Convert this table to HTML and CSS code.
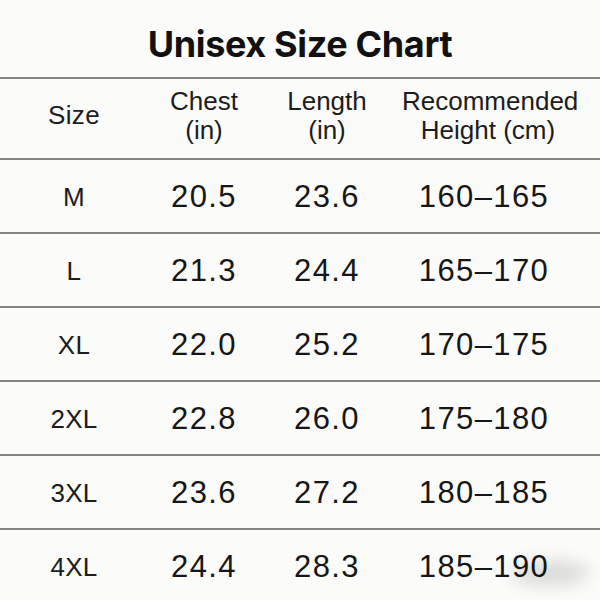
FILE: index.html
```html
<!DOCTYPE html>
<html>
<head>
<meta charset="utf-8">
<link rel="stylesheet" href="styles.css">
</head>
<body>
<div class="page">
  <h1 class="title">Unisex Size Chart</h1>
  <div class="table">
    <div class="row head">
      <div class="cell size">Size</div>
      <div class="cell">Chest<br>(in)</div>
      <div class="cell">Length<br>(in)</div>
      <div class="cell">Recommended<br>Height (cm)</div>
    </div>
    <div class="row data"><div class="cell size">M</div><div class="cell num">20.5</div><div class="cell num">23.6</div><div class="cell num">160–165</div></div>
    <div class="row data"><div class="cell size">L</div><div class="cell num">21.3</div><div class="cell num">24.4</div><div class="cell num">165–170</div></div>
    <div class="row data"><div class="cell size">XL</div><div class="cell num">22.0</div><div class="cell num">25.2</div><div class="cell num">170–175</div></div>
    <div class="row data"><div class="cell size">2XL</div><div class="cell num">22.8</div><div class="cell num">26.0</div><div class="cell num">175–180</div></div>
    <div class="row data"><div class="cell size">3XL</div><div class="cell num">23.6</div><div class="cell num">27.2</div><div class="cell num">180–185</div></div>
    <div class="row data last"><div class="cell size">4XL</div><div class="cell num">24.4</div><div class="cell num">28.3</div><div class="cell num">185–190</div></div>
  </div>
  <div class="smudge"></div>
</div>
</body>
</html>
```
FILE: styles.css
```css
html, body {
  margin: 0;
  padding: 0;
  background: #fbfbf9;
}
.page {
  position: relative;
  width: 600px;
  height: 600px;
  overflow: hidden;
  font-family: "Liberation Sans", Arial, sans-serif;
  color: #111;
}
.title {
  margin: 0;
  height: 77px;
  display: flex;
  align-items: center;
  justify-content: center;
  padding-top: 10px;
  box-sizing: border-box;
  font-size: 36px;
  font-weight: bold;
  letter-spacing: -0.35px;
  font-family: "Inter", "Liberation Sans", sans-serif;
}
.table {
  border-top: 2px solid #858585;
}
.row {
  display: grid;
  grid-template-columns: 148px 112px 134px 180px;
  height: 72px;
  border-bottom: 2px solid #858585;
  align-items: center;
}
.row.data {
  padding-top: 3px;
  box-sizing: content-box;
  height: 69px;
}
.row.head {
  height: 81px;
  padding-bottom: 5px;
  box-sizing: border-box;
}
.row.head .cell:last-child {
  padding-left: 8px;
}
.row.last {
  border-bottom: none;
}
.cell {
  text-align: center;
  line-height: 1.12;
}
.head .cell {
  font-size: 26px;
  color: #1c1c1c;
}
.size {
  font-size: 26px;
  color: #1c1c1c;
  letter-spacing: 0.3px;
}
.num {
  font-size: 31px;
  letter-spacing: 1.4px;
  color: #161616;
}
.smudge {
  position: absolute;
  left: 510px;
  top: 560px;
  width: 80px;
  height: 26px;
  border-radius: 50%;
  background: rgba(0,0,0,0.12);
  filter: blur(8px);
}
```
